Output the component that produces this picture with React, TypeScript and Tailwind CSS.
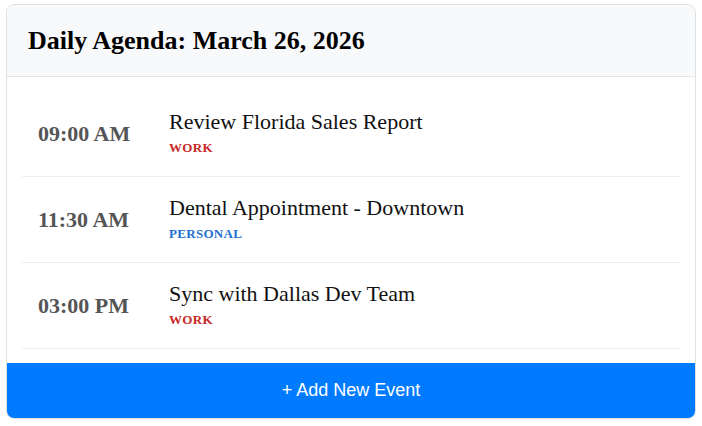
import React from "react";

const events = [
  { time: "09:00 AM", title: "Review Florida Sales Report", tag: "WORK", color: "text-[#c62828]" },
  { time: "11:30 AM", title: "Dental Appointment - Downtown", tag: "PERSONAL", color: "text-[#1e6fd0]" },
  { time: "03:00 PM", title: "Sync with Dallas Dev Team", tag: "WORK", color: "text-[#c62828]" },
];

export default function App() {
  return (
    <div className="w-[702px] h-[426px] bg-white pt-[4px] px-[6px] font-['Liberation_Serif',serif]">
      <div className="w-[690px] h-[415px] border border-[#e2e2e2] rounded-[8px] overflow-hidden flex flex-col">
        <div className="h-[72px] bg-[#f8f9fb] border-b border-[#e6e6e6] flex items-center px-[21px]">
          <h2 className="text-[26px] font-bold text-black leading-none">Daily Agenda: March 26, 2026</h2>
        </div>
        <div className="px-[15px] pt-[14px] pb-[14px] flex-1">
          {events.map((e) => (
            <div key={e.time} className="h-[86px] border-b border-[#eeeeee] flex items-center">
              <div className="w-[147px] pl-[16px] text-[22px] font-bold text-[#555555]">{e.time}</div>
              <div className="flex flex-col pb-[3px]">
                <div className="text-[22px] text-[#111111] leading-[26px]">{e.title}</div>
                <div className={`text-[13px] font-bold tracking-[0.3px] mt-[5px] leading-[16px] ${e.color}`}>{e.tag}</div>
              </div>
            </div>
          ))}
        </div>
        <button className="h-[55px] bg-[#007bff] text-white text-[18px] font-['Liberation_Sans',Arial,sans-serif] w-full">
          + Add New Event
        </button>
      </div>
    </div>
  );
}
